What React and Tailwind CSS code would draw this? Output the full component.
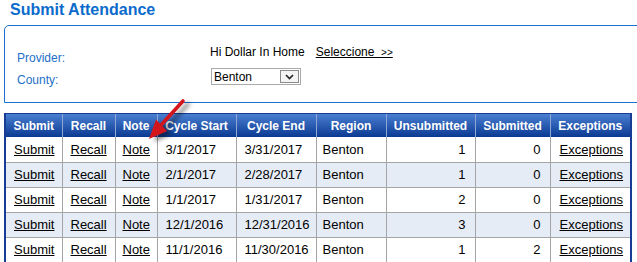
import React from 'react';

const rows = [
  ['3/1/2017', '3/31/2017', 'Benton', '1', '0'],
  ['2/1/2017', '2/28/2017', 'Benton', '1', '0'],
  ['1/1/2017', '1/31/2017', 'Benton', '2', '0'],
  ['12/1/2016', '12/31/2016', 'Benton', '3', '0'],
  ['11/1/2016', '11/30/2016', 'Benton', '1', '2'],
];

const headers = ['Submit', 'Recall', 'Note', 'Cycle Start', 'Cycle End', 'Region', 'Unsubmitted', 'Submitted', 'Exceptions'];
const widths = ['w-[56px]', 'w-[53px]', 'w-[42px]', 'w-[79px]', 'w-[80px]', 'w-[70px]', 'w-[89px]', 'w-[75px]', 'w-[80px]'];

function Arrow() {
  return (
    <svg className="absolute left-0 top-0 pointer-events-none" width="637" height="262" viewBox="0 0 637 262">
      <defs>
        <filter id="sh" x="-50%" y="-50%" width="200%" height="200%">
          <feDropShadow dx="5" dy="3" stdDeviation="2.2" floodColor="#000" floodOpacity="0.45" />
        </filter>
      </defs>
      <g filter="url(#sh)">
        <line x1="183" y1="101" x2="162" y2="124" stroke="#d3141b" strokeWidth="3.6" strokeLinecap="round" />
        <polygon points="149,139 167,131 156,119.5" fill="#d3141b" />
      </g>
    </svg>
  );
}

export default function App() {
  return (
    <div className="relative w-[637px] h-[262px] overflow-hidden bg-white font-['Liberation_Sans',Arial,sans-serif]">
      <div className="h-[20px] pl-[10px] text-[16px] leading-[20px] font-bold text-[#0b6bcc]">Submit Attendance</div>
      <div className="mt-[5px] ml-[4px] w-[650px] border border-[#1c6fce] rounded-tl-[5px] pt-[19px] pb-[15px] pl-[12px]">
        <div className="grid grid-cols-[193px_1fr] items-start">
          <div className="mt-[6px] text-[12px] leading-[14px] text-[#2370c9]">Provider:</div>
          <div className="flex text-[12px] leading-[14px] text-black">
            <span>Hi Dollar In Home</span>
            <span className="ml-[11px] underline">Seleccione&nbsp;&nbsp;<span className="text-[10px]">&gt;&gt;</span></span>
          </div>
        </div>
        <div className="grid grid-cols-[193px_1fr] items-start mt-[3px]">
          <div className="mt-[5px] text-[12px] leading-[14px] text-[#2370c9]">County:</div>
          <div className="ml-[1px] flex items-center w-[90px] h-[17px] border border-[#a9a9a9] bg-white">
            <span className="flex-1 pl-[2px] text-[12px] leading-[14px] text-black">Benton</span>
            <span className="mr-[1px] flex items-center justify-center w-[19px] h-[13px] border border-[#8a8a8a] bg-[#f4f4f4]">
              <svg width="9" height="6" viewBox="0 0 9 6"><path d="M1 1 L4.5 4.5 L8 1" fill="none" stroke="#222" strokeWidth="1.6" /></svg>
            </span>
          </div>
        </div>
      </div>
      <div className="mt-[10px] ml-[4px] w-[628px] border-x-2 border-t border-[#173c95]">
        <table className="table-fixed w-[624px] border-collapse text-[13px]">
          <colgroup>
            {widths.map((w, i) => <col key={i} className={w} />)}
          </colgroup>
          <thead>
            <tr className="h-[23px] bg-gradient-to-b from-[#4a7fd0] to-[#0a3993]">
              {headers.map((h, i) => (
                <th key={h} className={`p-0 text-center text-[12px] font-bold text-white leading-[14px] ${i > 0 ? 'border-l border-[#8fa7d4]' : ''}`}>{h}</th>
              ))}
            </tr>
          </thead>
          <tbody>
            {rows.map((r, ri) => (
              <tr key={ri} className={`h-[25px] ${ri % 2 === 1 ? 'bg-[#e6ecf5]' : 'bg-white'}`}>
                <td className="p-0 pl-[8px] border-b border-[#a5a5a5] text-black"><span className="underline">Submit</span></td>
                <td className="p-0 pl-[8px] border-l border-b border-[#a5a5a5] text-black"><span className="underline">Recall</span></td>
                <td className="p-0 pl-[7px] border-l border-b border-[#a5a5a5] text-black"><span className="underline">Note</span></td>
                <td className="p-0 pl-[8px] border-l border-b border-[#a5a5a5] text-black">{r[0]}</td>
                <td className="p-0 pl-[8px] border-l border-b border-[#a5a5a5] text-black">{r[1]}</td>
                <td className="p-0 pl-[6px] border-l border-b border-[#a5a5a5] text-black">{r[2]}</td>
                <td className="p-0 pr-[9px] text-right border-l border-b border-[#a5a5a5] text-black">{r[3]}</td>
                <td className="p-0 pr-[9px] text-right border-l border-b border-[#a5a5a5] text-black">{r[4]}</td>
                <td className="p-0 pl-[9px] border-l border-b border-[#a5a5a5] text-black"><span className="underline">Exceptions</span></td>
              </tr>
            ))}
          </tbody>
        </table>
      </div>
      <Arrow />
    </div>
  );
}
